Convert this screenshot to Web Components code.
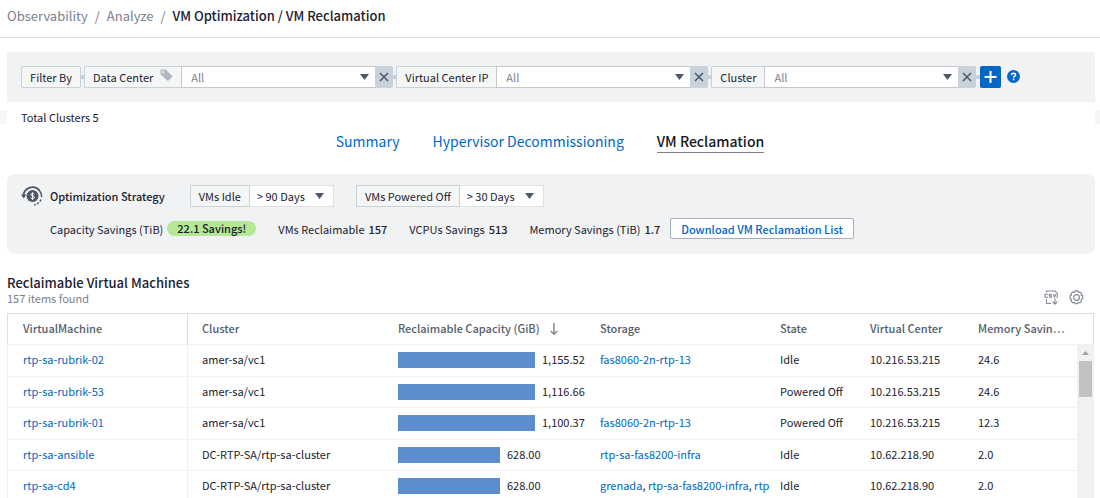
<!DOCTYPE html>
<html lang="en">
<head>
<meta charset="utf-8">
<title>VM Optimization / VM Reclamation</title>
<style>
  body {
    margin: 0;
    height: 100vh;
    display: flex;
    flex-direction: column;
    overflow: hidden;
    background: #fff;
    color: #1b212e;
    font: 11px/20px "Noto Sans CJK SC", "Noto Sans", sans-serif;
    --link: #0067c5;
    --panel: #f1f2f4;
    --line: #c8d2da;
    --muted: #7b808c;
    --slate: #4d5768;
  }
</style>
</head>
<body>
<app-breadcrumb>
  <a href="#observability">Observability</a>
  <a href="#analyze">Analyze</a>
  <span slot="current">VM Optimization / VM Reclamation</span>
</app-breadcrumb>
<filter-bar>
  <filter-field label="Data Center" tagged></filter-field>
  <filter-field label="Virtual Center IP"></filter-field>
  <filter-field label="Cluster"></filter-field>
</filter-bar>
<cluster-total>Total Clusters 5</cluster-total>
<tab-list>
  <a href="#summary">Summary</a>
  <a href="#hypervisor">Hypervisor Decommissioning</a>
  <a href="#reclamation" aria-current="page">VM Reclamation</a>
</tab-list>
<strategy-panel>
  <age-select slot="controls" label="VMs Idle" value="&gt; 90 Days"></age-select>
  <age-select slot="controls" label="VMs Powered Off" value="&gt; 30 Days"></age-select>
  <stat-item label="Capacity Savings (TiB)" value="22.1 Savings!" pill></stat-item>
  <stat-item label="VMs Reclaimable" value="157"></stat-item>
  <stat-item label="VCPUs Savings" value="513"></stat-item>
  <stat-item label="Memory Savings (TiB)" value="1.7"></stat-item>
</strategy-panel>
<vm-table></vm-table>

<script>
const define = (name, html, setup) => customElements.define(name, class extends HTMLElement {
  constructor() {
    super();
    const t = document.createElement('template');
    t.innerHTML = html;
    this.attachShadow({ mode: 'open' }).append(t.content.cloneNode(true));
  }
  connectedCallback() {
    if (setup && !this.ready) { this.ready = true; setup(this, this.shadowRoot); }
  }
});

define('app-breadcrumb', `
<style>
  :host { display: block; flex: none; border-bottom: 1px solid #dcdee1; padding: 6px 7px 11px; font-size: 13px; color: var(--muted); }
  nav { display: flex; }
  ::slotted(a) { color: inherit; text-decoration: none; }
  ::slotted(a)::after { content: "/"; margin: 0 7px; }
  ::slotted(span) { color: #1b212e; font-weight: 500; }
</style>
<nav aria-label="Breadcrumb"><slot></slot><slot name="current"></slot></nav>`);

define('filter-bar', `
<style>
  :host { display: flex; flex: none; align-items: center; margin: 14px 5px 0 7px; padding: 14px; background: var(--panel); }
  .by { box-sizing: border-box; height: 22px; width: 60px; text-align: center; border: 1px solid var(--line); border-radius: 2px; background: #f5f7f7; }
  .add { display: flex; align-items: center; height: 22px; width: 25px; padding: 0; border: 0; margin: 0; background: none; }
  .add::before { content: ""; width: 4px; height: 4px; background: var(--line); }
  .add svg { background: var(--link); border-radius: 2px; }
  .help { padding: 0; margin: 0 0 2px 6px; border: 0; background: none; display: flex; }
</style>
<span class="by">Filter By</span>
<slot></slot>
<button class="add" aria-label="Add filter"><svg width="21" height="22" viewBox="0 0 21 22"><path d="M10.500 5v12M4.500 11h12" stroke="#fff" stroke-width="2"/></svg></button>
<button class="help" aria-label="Help"><svg width="13" height="13" viewBox="0 0 12 12"><circle cx="6" cy="6" r="6" fill="#0067c5"/><path d="M4.200 4.600C4.200 3.500 5 2.900 6 2.900s1.900.6 1.900 1.600C7.900 5.700 6.100 5.700 6.100 7.100" fill="none" stroke="#fff" stroke-width="1.400"/><rect x="5.300" y="8" width="1.500" height="1.500" fill="#fff"/></svg></button>`);

define('filter-field', `
<style>
  :host { display: flex; align-items: center; height: 22px; }
  :host::before { content: ""; width: 3px; height: 4px; background: var(--line); }
  label, select, button { box-sizing: border-box; height: 22px; }
  label { display: flex; gap: 7px; line-height: 20px; padding: 0 8px; border: 1px solid var(--line); border-right: 0; border-radius: 2px 0 0 2px; background: #f5f7f7; }
  svg { display: block; }
  label svg { margin-top: 2px; display: none; }
  :host([tagged]) label svg { display: block; }
  .box { position: relative; display: flex; }
  select { appearance: none; width: 194px; margin: 0; padding: 0 9px; border: 1px solid #c4c8cc; border-right: 0; border-radius: 0; background: #fff; color: var(--muted); font: inherit; }
  .box svg { position: absolute; right: 6px; top: 8px; pointer-events: none; }
  button { width: 18px; padding: 0; border: 0; display: grid; place-items: center; background: #c8d2da; border-radius: 0 2px 2px 0; }
</style>
<label for="s"><span></span><svg width="13" height="13" viewBox="0 0 13 13"><path d="M.5 1.500a1 1 0 0 1 1-1h4.300L12 6.700q.7.7 0 1.400L8.600 11.500q-.7.7-1.400 0L.5 5.500z" fill="#b1b8c1"/><circle cx="3.200" cy="3.200" r="1.100" fill="#f5f7f7"/></svg></label>
<div class="box"><select id="s"><option>All</option></select><svg width="9" height="6" viewBox="0 0 9 6"><path d="M0 0h9L4.500 6z" fill="#4d5768"/></svg></div>
<button aria-label="Remove filter"><svg width="10" height="10" viewBox="0 0 10 10"><path d="M1 1l8 8M9 1l-8 8" stroke="#4d5768" stroke-width="1.500"/></svg></button>`,
(el, root) => { root.querySelector('span').textContent = el.getAttribute('label'); });

define('cluster-total', `
<style>
  :host { display: block; flex: none; margin-top: 8px; height: 14px; background: #f5f7f7; }
  div { margin: 0 5px 0 7px; padding-left: 14px; background: #fff; line-height: 14px; }
</style>
<div><slot></slot></div>`);

define('tab-list', `
<style>
  :host { display: block; flex: none; font-size: 14px; }
  nav { display: flex; justify-content: center; gap: 33px; padding: 6px 0 21px; }
  ::slotted(a) { color: var(--link); text-decoration: none; line-height: 22px; border-bottom: 1px solid transparent; }
  ::slotted(a[aria-current]) { color: #15181f; font-weight: 500; border-bottom-color: #7b808c; }
</style>
<nav><slot></slot></nav>`);

define('strategy-panel', `
<style>
  :host { display: block; flex: none; box-sizing: border-box; margin: 0 5px 0 7px; padding: 11px 14px 15px; background: var(--panel); border-radius: 8px; }
  .row { display: flex; align-items: center; }
  h2 { margin: 0 0 0 7px; font-size: 11px; line-height: 20px; font-weight: 500; }
  .controls slot { display: flex; gap: 22px; margin-left: 25px; }
  .stats { margin-top: 11px; padding-left: 29px; }
  .stats slot { display: flex; gap: 22px; }
  button { box-sizing: border-box; height: 21px; margin: 0 0 0 10px; padding: 0 10px; border: 1px solid #a5afba; border-radius: 2px; background: #fff; color: var(--link); font: inherit; font-weight: 500; line-height: 18px; }
</style>
<div class="row controls">
  <svg width="22" height="22" viewBox="0 0 22 22" fill="none" stroke="#4d5768"><circle cx="11.500" cy="11" r="6" fill="#4d5768" stroke="none"/><path d="M2.600 12A9 9 0 0 1 18.500 5.500" stroke-width="1.800"/><path d="M18.200 5.200A9.400 9.400 0 0 1 20.600 12" stroke-width="1.600"/><path d="M20 14.500A9.400 9.400 0 0 1 13 20" stroke-width="1.400" stroke-dasharray="2.400 1.300"/><path d="M0 9.500h5.400L2.700 13.500z" fill="#4d5768" stroke="none"/><path d="M13.400 9.400C13 8.300 9.900 8 9.900 9.700 9.900 11.400 13.400 10.500 13.400 12.400 13.400 14 10 13.900 9.600 12.700M11.600 7.200v7.800" stroke="#fff" stroke-width="1"/></svg>
  <h2>Optimization Strategy</h2>
  <slot name="controls"></slot>
</div>
<div class="row stats"><slot></slot><button>Download VM Reclamation List</button></div>`);

define('age-select', `
<style>
  :host { display: flex; }
  label, select { box-sizing: border-box; height: 22px; }
  label { line-height: 20px; padding: 0 8px; border: 1px solid var(--line); background: #f5f7f7; }
  .box { position: relative; }
  select { display: block; appearance: none; width: 84px; margin: 0; padding: 0 7px; border: 1px solid #dde2e7; border-left: 0; border-radius: 0; background: #fff; color: inherit; font: inherit; }
  svg { position: absolute; right: 10px; top: 8px; pointer-events: none; }
</style>
<label for="s"></label>
<div class="box"><select id="s"><option></option></select><svg width="9" height="6" viewBox="0 0 9 6"><path d="M0 0h9L4.500 6z" fill="#4d5768"/></svg></div>`,
(el, root) => {
  root.querySelector('label').textContent = el.getAttribute('label');
  root.querySelector('option').textContent = el.getAttribute('value');
});

define('stat-item', `
<style>
  :host { display: flex; align-items: center; gap: 4px; line-height: 16px; }
  b { font-weight: 500; }
  :host([pill]) b { padding: 0 10px; border-radius: 8px; background: #b3e894; line-height: 15px; }
</style>
<span></span><b></b>`,
(el, root) => {
  root.querySelector('span').textContent = el.getAttribute('label');
  root.querySelector('b').textContent = el.getAttribute('value');
});

define('capacity-bar', `
<style>
  :host { display: flex; align-items: flex-start; gap: 7px; }
  i { height: 16px; margin-top: 3px; background: #5c8dcf; }
</style>
<i></i><slot></slot>`,
(el, root) => { root.querySelector('i').style.width = el.getAttribute('size') + 'px'; });

const rows = [
  ['rtp-sa-rubrik-02', 'amer-sa/vc1', '1,155.52', 137, ['fas8060-2n-rtp-13'], 'Idle', '10.216.53.215', '24.6'],
  ['rtp-sa-rubrik-53', 'amer-sa/vc1', '1,116.66', 137, [], 'Powered Off', '10.216.53.215', '24.6'],
  ['rtp-sa-rubrik-01', 'amer-sa/vc1', '1,100.37', 137, ['fas8060-2n-rtp-13'], 'Powered Off', '10.216.53.215', '12.3'],
  ['rtp-sa-ansible', 'DC-RTP-SA/rtp-sa-cluster', '628.00', 102, ['rtp-sa-fas8200-infra'], 'Idle', '10.62.218.90', '2.0'],
  ['rtp-sa-cd4', 'DC-RTP-SA/rtp-sa-cluster', '628.00', 102, ['grenada', 'rtp-sa-fas8200-infra', 'rtp'], 'Idle', '10.62.218.90', '2.0']
];
const link = t => `<a href="#${t}">${t}</a>`;

define('vm-table', `
<style>
  :host { display: flex; flex-direction: column; flex: 1; min-height: 0; margin: 21px 6px 0 7px; }
  header { display: flex; flex: none; align-items: flex-end; }
  h2 { margin: 0; font-size: 13px; line-height: 16px; font-weight: 500; }
  p { margin: 0; color: var(--muted); line-height: 14px; }
  .tools { display: flex; gap: 10px; margin: 0 10px 0 auto; }
  .tools button { padding: 0; margin: 0; border: 0; background: none; }
  svg { display: block; }
  .grid { display: flex; flex: 1; min-height: 0; margin-top: 8px; overflow: hidden; }
  .view { flex: 1; min-width: 0; }
  table { width: 100%; table-layout: fixed; border-collapse: separate; border-spacing: 0; }
  th, td { box-sizing: border-box; height: 31px; padding: 0 0 0 7px; text-align: left; white-space: nowrap; overflow: hidden; line-height: 20px; border-bottom: 1px solid #f0f1f2; }
  td { vertical-align: top; padding-top: 4px; }
  tr:nth-child(odd) td { height: 32px; }
  tr > :first-child { padding-left: 15px; border-left: 1px solid #eceef0; border-right: 1px solid #eceef0; }
  tr > :nth-child(2) { padding-left: 14px; }
  th { height: 32px; padding-bottom: 2px; color: #565d6b; font-weight: 500; border-top: 1px solid #dcdee1; }
  th:first-child { border-color: #dcdee1; border-bottom-color: #f0f1f2; }
  th svg { display: inline-block; vertical-align: -2px; margin-left: 10px; }
  a { color: var(--link); text-decoration: none; }
  .side { display: flex; flex-direction: column; width: 17px; }
  .corner { flex: none; height: 30px; border: 1px solid #dcdee1; border-left: 0; border-bottom-color: #f0f1f2; }
  .track { flex: 1; background: #f1f1f1; display: flex; flex-direction: column; align-items: center; }
  .track svg { flex: none; margin: 6px 0; }
  .thumb { width: 13px; height: 36px; background: #c1c1c1; }
</style>
<header>
  <div><h2>Reclaimable Virtual Machines</h2><p>157 items found</p></div>
  <div class="tools">
    <button aria-label="Export CSV"><svg width="15" height="15" viewBox="0 0 15 15" fill="none" stroke="#858b95" stroke-width="1.100"><path d="M2.500 2.500V1h8.500l2.200 2.200V8M2.500 9v4.500h4.500M11 8.500v5.500M8.500 11.700l2.500 2.500 2.500-2.500"/><path d="M4 4.200H1v3H4M7.800 4.200H5.300v1.500h2.200v1.500H5M9.200 4l1.300 3.200L11.900 4"/></svg></button>
    <button aria-label="Table settings"><svg width="15" height="15" viewBox="0 0 15 15" fill="none" stroke="#858b95" stroke-width="1.200"><circle cx="7.500" cy="7.500" r="2.900"/><path d="M6.300.8h2.400l.6 1.300 1.500-.3 1.700 1.600-.4 1.500 1.600.8v3l-1.500.8.3 1.600-1.700 1.700-1.600-.4-.8 1.300H6.200l-.7-1.300-1.600.4-1.700-1.700.4-1.600-1.500-.8v-3l1.500-.8-.4-1.500L4 1.800l1.600.3z"/></svg></button>
  </div>
</header>
<div class="grid">
  <div class="view"><table>
    <colgroup><col style="width:181px"><col style="width:203px"><col style="width:202px"><col style="width:180px"><col style="width:90px"><col style="width:108px"><col></colgroup>
    <thead><tr><th>VirtualMachine</th><th>Cluster</th><th aria-sort="descending">Reclaimable Capacity (GiB)<svg width="8" height="12" viewBox="0 0 8 12" fill="none" stroke="#858b95" stroke-width="1.500"><path d="M4 0v11M.7 8L4 11.200 7.300 8"/></svg></th><th>Storage</th><th>State</th><th>Virtual Center</th><th>Memory Savin…</th></tr></thead>
    <tbody></tbody>
  </table></div>
  <div class="side"><div class="corner"></div><div class="track"><svg width="7" height="4" viewBox="0 0 7 4"><path d="M3.500 0L7 4H0z" fill="#a3a3a3"/></svg><div class="thumb"></div></div></div>
</div>`,
(el, root) => {
  root.querySelector('tbody').innerHTML = rows.map(([vm, cl, cap, size, st, state, vc, mem]) =>
    `<tr><td>${link(vm)}</td><td>${cl}</td><td><capacity-bar size="${size}">${cap}</capacity-bar></td><td>${st.map(link).join(', ')}</td><td>${state}</td><td>${vc}</td><td>${mem}</td></tr>`).join('');
});
</script>
</body>
</html>
